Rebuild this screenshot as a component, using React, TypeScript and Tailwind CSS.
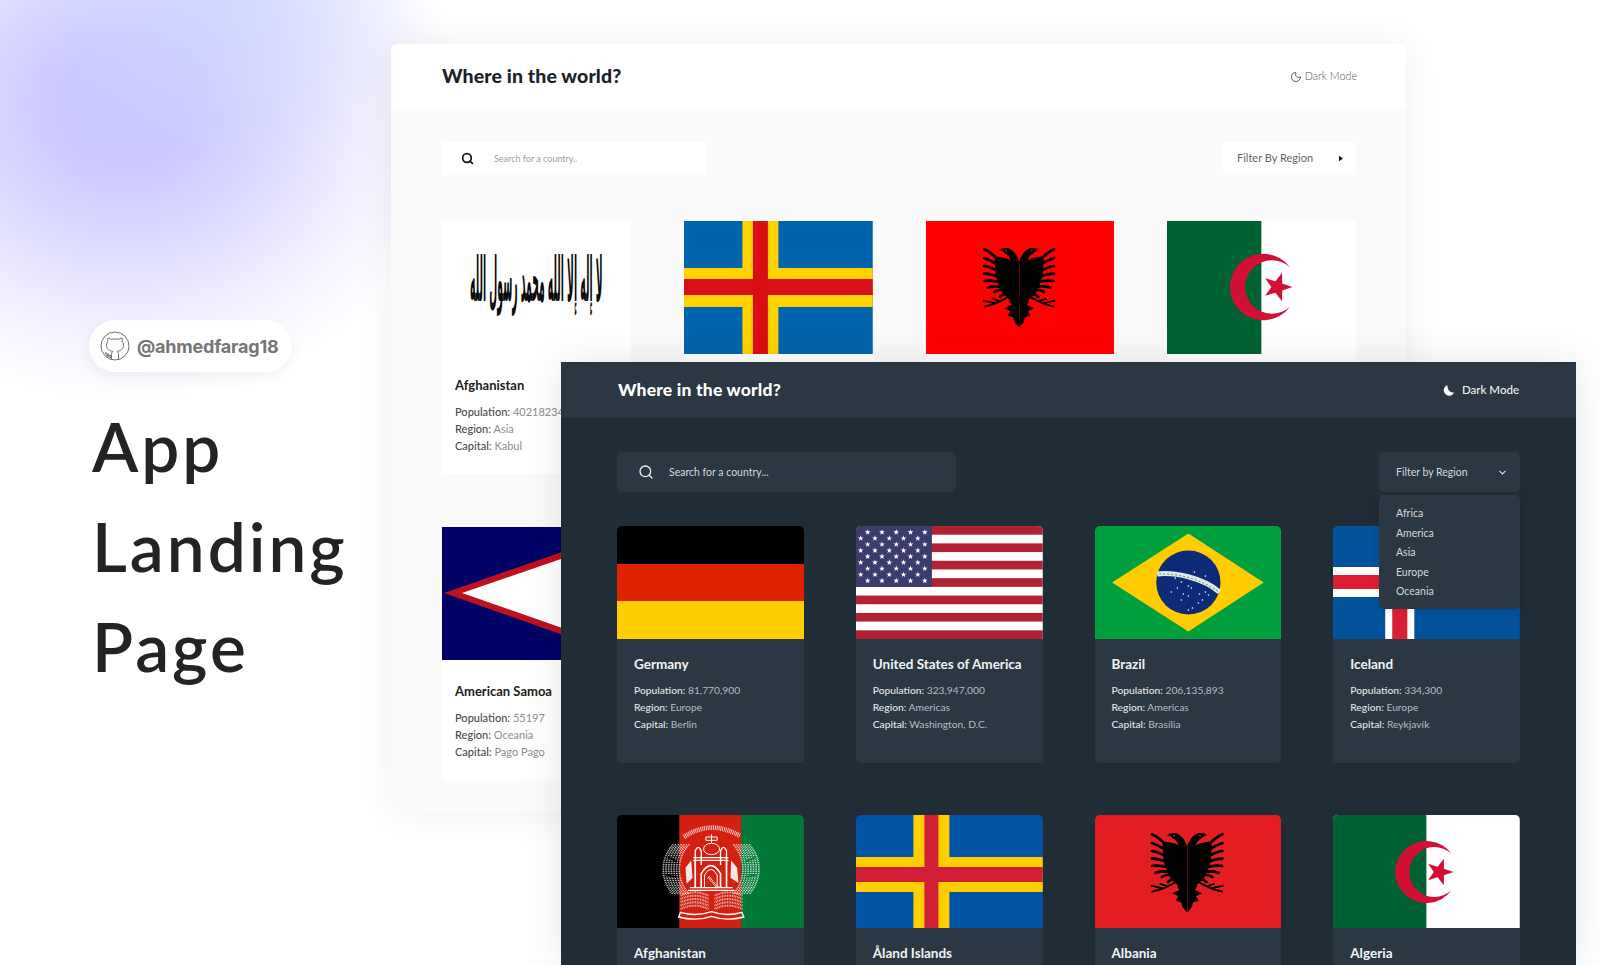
import { Search, ChevronDown, Moon } from "lucide-react";
import type { ReactNode } from "react";

type Info = { name: string; population: string; region: string; capital: string };

function FlagBox({ w, h, children }: { w: number; h: number; children: ReactNode }) {
  return (
    <svg viewBox={`0 0 ${w} ${h}`} preserveAspectRatio="none" className="block h-full w-full">
      {children}
    </svg>
  );
}

function starPoints(cx: number, cy: number, r: number, start = -90) {
  const pts: string[] = [];
  for (let i = 0; i < 10; i++) {
    const a = ((start + i * 36) * Math.PI) / 180;
    const rad = i % 2 === 0 ? r : r * 0.4;
    pts.push(`${(cx + rad * Math.cos(a)).toFixed(2)},${(cy + rad * Math.sin(a)).toFixed(2)}`);
  }
  return pts.join(" ");
}

function TalibanFlag() {
  return (
    <FlagBox w={188} h={133}>
      <rect width="188" height="133" fill="#fff" />
      <text
        x="160"
        y="60"
        direction="rtl"
        textAnchor="start"
        fontSize="33"
        fontFamily="'DejaVu Sans',sans-serif"
        fontWeight="700"
        fill="#0a0a0a"
        transform="translate(0 -32) scale(1 1.87)"
        textLength="132"
        lengthAdjust="spacingAndGlyphs"
      >
        لا إله إلا الله محمد رسول الله
      </text>
    </FlagBox>
  );
}

function AlandFlag({ dark }: { dark?: boolean }) {
  if (dark) {
    return (
      <FlagBox w={187} h={113}>
        <rect width="187" height="113" fill="#0053a5" />
        <rect x="57.5" width="36" height="113" fill="#ffce00" />
        <rect y="42" width="187" height="35" fill="#ffce00" />
        <rect x="68.5" width="14" height="113" fill="#d21f35" />
        <rect y="52" width="187" height="15" fill="#d21f35" />
      </FlagBox>
    );
  }
  return (
    <FlagBox w={189} h={133}>
      <rect width="189" height="133" fill="#0064ad" />
      <rect x="58.5" width="36" height="133" fill="#ffd300" />
      <rect y="47" width="189" height="39" fill="#ffd300" />
      <rect x="69" width="15" height="133" fill="#da0e15" />
      <rect y="58" width="189" height="16" fill="#da0e15" />
    </FlagBox>
  );
}

// wing fingers of the left half, in a 285 wide drawing
const feathers = [
  "M37 28 C52 34 66 46 82 62",
  "M37 54 C50 58 66 66 82 78",
  "M37 78 C50 80 66 86 82 96",
  "M37 101 C50 101 66 104 84 112",
  "M38 123 C52 121 70 122 88 128",
  "M48 143 C60 139 76 138 94 141",
  "M67 156 C76 150 88 148 102 150",
  "M85 171 C92 164 100 160 112 160",
];

function EagleHalf() {
  return (
    <g>
      {feathers.map((d) => (
        <path key={d} d={d} stroke="#000" strokeWidth="8" strokeLinecap="round" fill="none" />
      ))}
      {/* neck and head */}
      <path d="M142 62 C136 46 126 30 110 25 C100 22 90 24 82 31 C92 31 96 37 101 41 C108 45 114 50 117 62 Z" fill="#000" />
      <circle cx="104" cy="32" r="2.5" fill="#e41e20" />
      {/* wing mass and body */}
      <path d="M68 50 C92 50 112 56 118 62 L142 62 L142 178 L116 182 L92 160 L72 110 Z" fill="#000" />
      {/* tail */}
      <path d="M142 170 L112 182 L119 195 L98 205 L116 214 L108 227 L125 232 L128 246 L142 262 Z" fill="#000" />
      {/* leg and claws */}
      <path d="M116 166 L100 176 L72 190 L34 182 M72 190 L36 201 M84 184 L60 176" stroke="#000" strokeWidth="5.5" fill="none" />
    </g>
  );
}

function Eagle({ x, y }: { x: number; y: number }) {
  return (
    <g transform={`translate(${x - 11.7} ${y - 7}) scale(0.3333)`}>
      <EagleHalf />
      <g transform="translate(285 0) scale(-1 1)">
        <EagleHalf />
      </g>
    </g>
  );
}

function AlbaniaFlag({ dark }: { dark?: boolean }) {
  return dark ? (
    <FlagBox w={186} h={113}>
      <rect width="186" height="113" fill="#e41e20" />
      <Eagle x={56} y={17} />
    </FlagBox>
  ) : (
    <FlagBox w={190} h={133}>
      <rect width="190" height="133" fill="#ff0000" />
      <Eagle x={58} y={26} />
    </FlagBox>
  );
}

function AlgeriaMark({ x, y, s }: { x: number; y: number; s: number }) {
  return (
    <g transform={`translate(${x} ${y}) scale(${s})`} fill="#d21034">
      <path d="M25 -18.3 A31 31 0 1 0 25 18.3 A25 25 0 1 1 25 -18.3 Z" />
      <polygon points={starPoints(13, 0, 14, 0)} />
    </g>
  );
}

function AlgeriaFlag({ dark }: { dark?: boolean }) {
  const w = dark ? 186 : 188;
  const h = dark ? 113 : 133;
  return (
    <FlagBox w={w} h={h}>
      <rect width={w} height={h} fill="#fff" />
      <rect width={w / 2} height={h} fill="#006233" />
      {dark ? <AlgeriaMark x={93} y={57} s={1} /> : <AlgeriaMark x={96} y={66} s={1.07} />}
    </FlagBox>
  );
}

function SamoaFlag() {
  return (
    <FlagBox w={188} h={133}>
      <rect width="188" height="133" fill="#000066" />
      <polygon points="2,66 188,1 188,132" fill="#bd1021" />
      <polygon points="20,66 188,8 188,125" fill="#fff" />
    </FlagBox>
  );
}

function GermanyFlag() {
  return (
    <div className="flex h-full flex-col">
      <div className="flex-1 bg-black" />
      <div className="flex-1 bg-[#dd2200]" />
      <div className="flex-1 bg-[#ffce00]" />
    </div>
  );
}

function UsaFlag() {
  const stars: ReactNode[] = [];
  for (let r = 0; r < 9; r++) {
    for (let c = 0; c < 5; c++) {
      const cx = (r % 2 === 0 ? 11.7 : 4.7) + c * 14.3;
      stars.push(<polygon key={`${r}-${c}`} points={starPoints(cx, 6.3 + r * 6.05, 3)} fill="#fff" />);
    }
  }
  return (
    <FlagBox w={187} h={113}>
      <rect width="187" height="113" fill="#fff" />
      {[0, 2, 4, 6, 8, 10, 12].map((i) => (
        <rect key={i} y={(i * 113) / 13} width="187" height={113 / 13} fill="#b22234" />
      ))}
      <rect width="76" height="60.8" fill="#3c3b6e" />
      {stars}
    </FlagBox>
  );
}

function BrazilFlag() {
  const dots = [
    [76, 66], [82, 62], [86, 74], [88, 68], [93, 60], [96, 62], [93, 70], [97, 82], [93, 84],
    [104, 68], [107, 74], [103, 77], [110, 66], [113, 69], [86, 56], [110, 50], [80, 52], [99, 46],
  ];
  return (
    <FlagBox w={186} h={113}>
      <rect width="186" height="113" fill="#00a03e" />
      <polygon points="17,56.5 93,7.5 168,56.5 93,105.5" fill="#ffcc00" />
      <circle cx="93" cy="56.5" r="32" fill="#0c2a78" />
      <path d="M62 48 C80 46 108 52 124 66" stroke="#dfe9e6" strokeWidth="5" fill="none" />
      <path d="M64 48 C80 47 106 53 122 65" stroke="#5d9e7e" strokeWidth="1" strokeDasharray="2 2" fill="none" />
      {dots.map(([x, y]) => (
        <circle key={`${x}-${y}`} cx={x} cy={y} r="0.8" fill="#fff" />
      ))}
    </FlagBox>
  );
}

function IcelandFlag() {
  return (
    <FlagBox w={186} h={113}>
      <rect width="186" height="113" fill="#02529c" />
      <rect x="52" width="29" height="113" fill="#fff" />
      <rect y="41" width="186" height="30" fill="#fff" />
      <rect x="59" width="15" height="113" fill="#dc1e35" />
      <rect y="49" width="186" height="14" fill="#dc1e35" />
    </FlagBox>
  );
}

const wreathOffsets = [-24, -16, -8, 0, 8, 16, 24];

function AfghanEmblem() {
  const line = { stroke: "#fff", fill: "none", strokeWidth: 3 };
  return (
    <g transform="translate(43 0) scale(0.3333)">
      {/* wreath, dotted */}
      {wreathOffsets.map((dx) => (
        <g key={dx} fill="none" stroke="#fff" strokeOpacity="0.8" strokeWidth="5" strokeDasharray="3 2.5">
          <path d={`M${64 + dx} 88 C${26 + dx} 128 ${22 + dx} 192 ${64 + dx} 238`} />
          <path d={`M${244 + dx} 88 C${282 + dx} 128 ${284 + dx} 192 ${244 + dx} 238`} />
        </g>
      ))}
      <path d="M24 126 L52 140 M18 180 L52 186" stroke="#000" strokeWidth="5" />
      <path d="M288 126 L256 140 M290 180 L256 186" stroke="#007a36" strokeWidth="5" />
      {/* script on top */}
      <path d="M72 66 Q150 12 240 62" stroke="#fff" strokeOpacity="0.75" strokeWidth="14" strokeDasharray="3 2.5" fill="none" />
      {/* dome */}
      <ellipse cx="155" cy="102" rx="24" ry="17" {...line} />
      <path d="M138 66 H172 V76 H138 Z M155 58 V84" {...line} />
      {/* minarets */}
      <path d="M106 150 V108 Q115 86 124 108 V150 M182 150 V108 Q191 86 200 108 V150" stroke="#fff" strokeWidth="4" fill="none" />
      <path d="M100 128 H206 M100 136 H206" stroke="#fff" strokeWidth="4" fill="none" />
      {/* front and arch */}
      <path d="M106 136 V216 M200 136 V216" stroke="#fff" strokeWidth="5" />
      <path d="M124 216 V176 Q153 128 182 176 V216" stroke="#fff" strokeWidth="5" fill="none" />
      <path d="M134 216 V180 Q153 146 172 180 V216" {...line} />
      <path d="M146 186 L174 218" stroke="#fff" strokeWidth="8" strokeDasharray="2.5 2.5" />
      <path d="M90 218 H218 M84 226 H224" stroke="#fff" strokeWidth="4" />
      {/* flags */}
      <polygon points="77,158 94,136 98,188 80,206" fill="#f4e9e6" />
      <polygon points="232,158 214,136 212,188 236,204" fill="#f4e9e6" />
      {/* sheaves */}
      {[236, 246, 256, 266, 276].map((y) => (
        <path
          key={y}
          d={`M62 ${y + 6} Q105 ${y - 14} 146 ${y + 6} M248 ${y + 6} Q205 ${y - 14} 164 ${y + 6}`}
          stroke="#fff"
          strokeOpacity="0.65"
          strokeWidth="6"
          strokeDasharray="3 2"
          fill="none"
        />
      ))}
      {/* ribbon */}
      <path d="M62 292 Q110 306 155 290 Q200 306 246 292 L252 306 Q200 320 155 304 Q110 320 56 306 Z" fill="none" stroke="#fff" strokeWidth="4" />
    </g>
  );
}

function AfghanistanFlag() {
  return (
    <FlagBox w={187} h={113}>
      <rect width="62.5" height="113" fill="#000" />
      <rect x="62.5" width="62" height="113" fill="#d32011" />
      <rect x="124.5" width="62.5" height="113" fill="#007a36" />
      <AfghanEmblem />
    </FlagBox>
  );
}

function LightCard({ flag, info }: { flag: ReactNode; info?: Info }) {
  return (
    <div className="bg-white">
      <div className="h-[133px] overflow-hidden">{flag}</div>
      {info && (
        <div className="pl-[13px] pt-[21px] pb-[20px]">
          <h3 className="text-[13px] leading-[20px] font-bold text-[#1c1c1c]">{info.name}</h3>
          <div className="mt-[8px] text-[11px] leading-[17px] text-[#8d8d8d]">
            <p><span className="font-medium text-[#4a4a4a]">Population:</span> {info.population}</p>
            <p><span className="font-medium text-[#4a4a4a]">Region:</span> {info.region}</p>
            <p><span className="font-medium text-[#4a4a4a]">Capital:</span> {info.capital}</p>
          </div>
        </div>
      )}
    </div>
  );
}

function LightWindow() {
  return (
    <div className="absolute left-[391px] top-[44px] w-[1015px] overflow-hidden rounded-t-[6px] bg-[#fafafa] pb-[31px] shadow-[0_0_40px_rgba(0,0,0,0.07)]">
      <header className="flex h-[65px] items-center justify-between bg-white pl-[51px] pr-[49px]">
        <h1 className="-mt-[2px] text-[19.5px] font-black tracking-[0.1px] text-[#1a2127]">Where in the world?</h1>
        <div className="flex items-center gap-[3px] text-[10.75px] font-light text-[#555]">
          <Moon size={12} strokeWidth={1.4} className="text-[#222]" />
          <span>Dark Mode</span>
        </div>
      </header>
      <div className="pl-[51px] pr-[50px]">
        <div className="mt-[33px] flex items-center justify-between">
          <div className="flex h-[33px] w-[264px] items-center rounded-[2px] bg-white pl-[19px]">
            <Search size={13} strokeWidth={3.2} className="text-[#111]" />
            <span className="ml-[20px] text-[9px] text-[#a0a0a0]">Search for a country..</span>
          </div>
          <div className="flex h-[33px] w-[133px] items-center justify-between rounded-[3px] bg-white pl-[14px] pr-[13px]">
            <span className="text-[11px] text-[#666]">Filter By Region</span>
            <svg viewBox="0 0 5 7" className="h-[7px] w-[4px]">
              <polygon points="0,0 5,3.5 0,7" fill="#111" />
            </svg>
          </div>
        </div>
        <div className="mt-[46px] grid grid-cols-4 gap-x-[53px] gap-y-[53px]">
          <LightCard flag={<TalibanFlag />} info={{ name: "Afghanistan", population: "40218234", region: "Asia", capital: "Kabul" }} />
          <LightCard flag={<AlandFlag />} />
          <LightCard flag={<AlbaniaFlag />} />
          <LightCard flag={<AlgeriaFlag />} />
          <LightCard flag={<SamoaFlag />} info={{ name: "American Samoa", population: "55197", region: "Oceania", capital: "Pago Pago" }} />
        </div>
      </div>
    </div>
  );
}

function DarkCard({ flag, info }: { flag: ReactNode; info: Info }) {
  return (
    <div className="h-[237px] overflow-hidden rounded-[5px] bg-[#2b3743]">
      <div className="h-[113px] overflow-hidden">{flag}</div>
      <div className="px-[17px] pt-[15px]">
        <h3 className="text-[13.5px] leading-[20px] font-bold text-[#f2f4f6]">{info.name}</h3>
        <div className="mt-[8px] text-[10.25px] leading-[17px] text-[#b4bcc5]">
          <p><span className="font-medium text-[#e4e7ea]">Population:</span> {info.population}</p>
          <p><span className="font-medium text-[#e4e7ea]">Region:</span> {info.region}</p>
          <p><span className="font-medium text-[#e4e7ea]">Capital:</span> {info.capital}</p>
        </div>
      </div>
    </div>
  );
}

const dropdownItems = ["Africa", "America", "Asia", "Europe", "Oceania"];

function DarkWindow() {
  return (
    <div className="absolute left-[561px] top-[362px] h-[603px] w-[1015px] overflow-hidden bg-[#202c36] shadow-[0_0_40px_rgba(0,0,0,0.1)]">
      <header className="flex h-[56px] items-center justify-between bg-[#2b3743] px-[57px]">
        <h2 className="text-[17.5px] font-black tracking-[0.2px] text-white">Where in the world?</h2>
        <div className="flex items-center gap-[7px] text-[11.5px] font-medium text-[#eef0f2]">
          <svg viewBox="0 0 12 12" className="h-[12px] w-[12px]">
            <path d="M4.5 1 A5.5 5.5 0 1 0 11.2 8.6 A6.4 6.4 0 0 1 4.5 1 Z" fill="#fff" />
          </svg>
          <span>Dark Mode</span>
        </div>
      </header>
      <div className="px-[56px] pt-[34px]">
        <div className="flex items-center justify-between">
          <div className="flex h-[40px] w-[339px] items-center rounded-[5px] bg-[#2b3743] pl-[21px] text-[#eef0f2]">
            <Search size={16} strokeWidth={2} />
            <span className="ml-[15px] mt-[2px] text-[10.5px] text-[#d5d9dd]">Search for a country...</span>
          </div>
          <div className="relative z-10">
            <div className="flex h-[40px] w-[141px] items-center justify-between rounded-[5px] bg-[#2b3743] pl-[17px] pr-[12px]">
              <span className="mt-[2px] text-[10.5px] text-[#d5d9dd]">Filter by Region</span>
              <ChevronDown size={11} strokeWidth={2.5} className="text-[#e4e7ea]" />
            </div>
            <div className="absolute left-0 top-[43px] h-[114px] w-[141px] rounded-[5px] bg-[#2b3743] pl-[17px] pt-[9px] shadow-[0_2px_6px_rgba(0,0,0,0.1)]">
              {dropdownItems.map((item) => (
                <p key={item} className="text-[10.5px] leading-[19.6px] text-[#d5d9dd]">{item}</p>
              ))}
            </div>
          </div>
        </div>
        <div className="mt-[34px] grid grid-cols-4 gap-x-[52px] gap-y-[52px]">
          <DarkCard flag={<GermanyFlag />} info={{ name: "Germany", population: "81,770,900", region: "Europe", capital: "Berlin" }} />
          <DarkCard flag={<UsaFlag />} info={{ name: "United States of America", population: "323,947,000", region: "Americas", capital: "Washington, D.C." }} />
          <DarkCard flag={<BrazilFlag />} info={{ name: "Brazil", population: "206,135,893", region: "Americas", capital: "Brasília" }} />
          <DarkCard flag={<IcelandFlag />} info={{ name: "Iceland", population: "334,300", region: "Europe", capital: "Reykjavík" }} />
          <DarkCard flag={<AfghanistanFlag />} info={{ name: "Afghanistan", population: "27,657,145", region: "Asia", capital: "Kabul" }} />
          <DarkCard flag={<AlandFlag dark />} info={{ name: "Åland Islands", population: "28,875", region: "Europe", capital: "Mariehamn" }} />
          <DarkCard flag={<AlbaniaFlag dark />} info={{ name: "Albania", population: "2,886,026", region: "Europe", capital: "Tirana" }} />
          <DarkCard flag={<AlgeriaFlag dark />} info={{ name: "Algeria", population: "40,400,000", region: "Africa", capital: "Algiers" }} />
        </div>
      </div>
    </div>
  );
}

function GithubMark() {
  return (
    <svg viewBox="0 0 30 30" className="h-[30px] w-[30px]" fill="none" stroke="#6f6f6f" strokeWidth="1">
      <circle cx="15" cy="15" r="14" />
      <path d="M18.5 28.5 V23.5 C18.5 22 18 21 17.2 20.3 C20.5 20 23.5 18.4 23.5 14 C23.5 12.6 23 11.4 22.2 10.5 C22.5 9.3 22.4 8 22 7 C22 7 20.6 7 18.8 8.4 C16.4 7.8 13.6 7.8 11.2 8.4 C9.4 7 8 7 8 7 C7.6 8 7.5 9.3 7.8 10.5 C7 11.4 6.5 12.6 6.5 14 C6.5 18.4 9.5 20 12.8 20.3 C12 21 11.5 22 11.5 23.5 V28.5" />
      <path d="M11.5 24.5 C8 25.5 7.5 22.5 5 22 M11 26.5 C8.5 26.5 7.5 25.5 6.5 24" strokeWidth="1.3" />
    </svg>
  );
}

export default function App() {
  return (
    <div className="relative h-[965px] w-[1600px] overflow-hidden bg-white font-['Lato',sans-serif]">
      {/* purple glow behind the left column */}
      <div className="absolute left-0 top-0 h-[520px] w-[600px] bg-[radial-gradient(ellipse_200px_170px_at_230px_-10px,rgba(200,214,255,0.6)_0%,rgba(208,220,255,0.35)_55%,rgba(255,255,255,0)_100%),radial-gradient(ellipse_340px_300px_at_125px_105px,#c8c7ff_0%,#cac8ff_20%,#d9d7ff_42%,#ebe9ff_64%,#f7f6ff_84%,rgba(255,255,255,0)_100%)]" />

      <div className="relative pl-[89px] pt-[320px]">
        <div className="flex h-[52px] w-[203px] items-center gap-[7px] rounded-full bg-white pl-[11px] shadow-[0_6px_14px_rgba(0,0,0,0.05)]">
          <GithubMark />
          <span className="font-['Inter',sans-serif] text-[18px] font-bold tracking-[-0.2px] text-[#757575]">@ahmedfarag18</span>
        </div>
        <div className="mt-[24px] pl-[3px] text-[67.5px] leading-[100px] font-semibold tracking-[3px] text-[#232323]">
          <p>App</p>
          <p>Landing</p>
          <p>Page</p>
        </div>
      </div>

      <LightWindow />
      <DarkWindow />
    </div>
  );
}
